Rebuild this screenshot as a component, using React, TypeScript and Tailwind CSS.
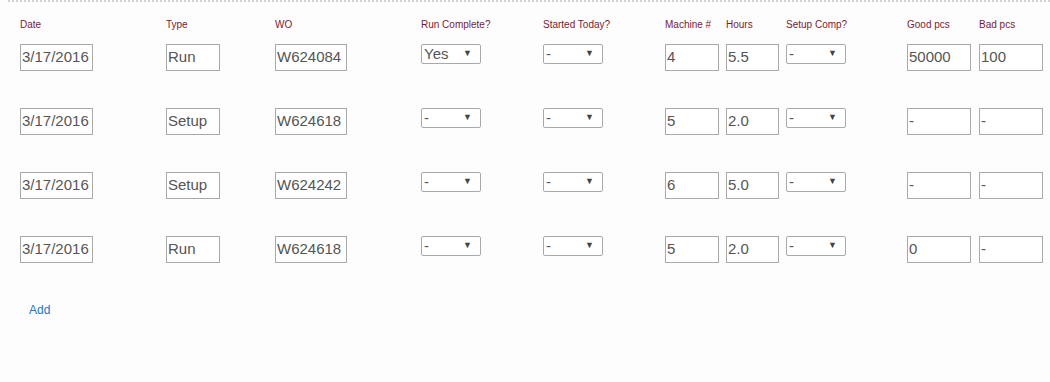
const rows = [
  { date: "3/17/2016", type: "Run", wo: "W624084", run: "Yes", started: "-", machine: "4", hours: "5.5", setup: "-", good: "50000", bad: "100" },
  { date: "3/17/2016", type: "Setup", wo: "W624618", run: "-", started: "-", machine: "5", hours: "2.0", setup: "-", good: "-", bad: "-" },
  { date: "3/17/2016", type: "Setup", wo: "W624242", run: "-", started: "-", machine: "6", hours: "5.0", setup: "-", good: "-", bad: "-" },
  { date: "3/17/2016", type: "Run", wo: "W624618", run: "-", started: "-", machine: "5", hours: "2.0", setup: "-", good: "0", bad: "-" },
];

const headers = ["Date", "Type", "WO", "Run Complete?", "Started Today?", "Machine #", "Hours", "Setup Comp?", "Good pcs", "Bad pcs"];

const grid = "grid grid-cols-[146px_109px_146px_122px_122px_61px_60px_121px_72px_71px]";

function Field({ value, w }: { value: string; w: string }) {
  return (
    <div className={`${w} flex h-[27px] items-center border border-[#a9a9a9] bg-white pl-[1px] text-[15px] text-[#555]`}>
      {value}
    </div>
  );
}

function Pick({ value }: { value: string }) {
  return (
    <div className="flex h-[20px] w-[60px] items-center justify-between rounded-[2px] border border-[#a9a9a9] bg-white pl-[2px] pr-[8px] text-[15px] text-[#555]">
      <span>{value}</span>
      <span className="text-[9px] text-[#444]">▼</span>
    </div>
  );
}

export default function App() {
  return (
    <div className="h-[382px] w-full bg-[#fdfdfd] font-[Liberation_Sans,Arial,sans-serif]">
      <div className="ml-[8px] border-t-2 border-dotted border-[#d4d4d4]" />
      <div className="pl-[20px]">
        <div className={`${grid} h-[42px] pt-[17px]`}>
          {headers.map((h) => (
            <div key={h} className="text-[10px] leading-[12px] text-[#7a1a35]">
              {h}
            </div>
          ))}
        </div>
        {rows.map((r, i) => (
          <div key={i} className={`${grid} h-[64px]`}>
            <div><Field value={r.date} w="w-[73px]" /></div>
            <div><Field value={r.type} w="w-[54px]" /></div>
            <div><Field value={r.wo} w="w-[72px]" /></div>
            <div><Pick value={r.run} /></div>
            <div><Pick value={r.started} /></div>
            <div><Field value={r.machine} w="w-[54px]" /></div>
            <div><Field value={r.hours} w="w-[53px]" /></div>
            <div><Pick value={r.setup} /></div>
            <div><Field value={r.good} w="w-[64px]" /></div>
            <div><Field value={r.bad} w="w-[64px]" /></div>
          </div>
        ))}
        <div className="pl-[9px] pt-[3px] text-[12px] leading-[14px] text-[#1f72c8]">Add</div>
      </div>
    </div>
  );
}
